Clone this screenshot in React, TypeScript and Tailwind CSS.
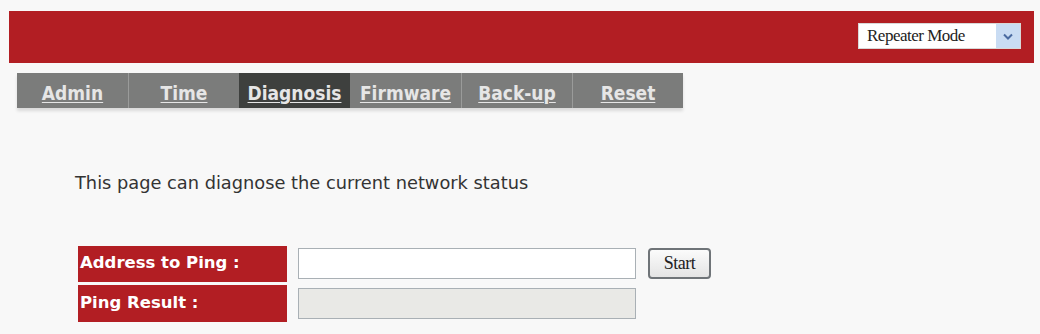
import { useState } from "react";

const tabs = ["Admin", "Time", "Diagnosis", "Firmware", "Back-up", "Reset"];

export default function App() {
  const [active] = useState("Diagnosis");
  const [addr, setAddr] = useState("");

  return (
    <div className="h-[334px] w-[1040px] overflow-hidden bg-[#f8f8f8] pt-[11px] font-['DejaVu_Sans',sans-serif]">
      {/* top banner */}
      <div className="ml-[9px] mr-[6px] flex h-[52px] items-start justify-end bg-[#b21e23] pr-[13px] pt-[12px]">
        <div className="flex h-[26px] w-[163px] items-center border border-[#d8d8d8] bg-white">
          <span className="flex-1 pl-[8px] font-['Liberation_Serif',serif] text-[17px] tracking-[-0.5px] text-[#222]">
            Repeater Mode
          </span>
          <span className="flex h-full w-[24px] items-center justify-center bg-[#c9dcf3]">
            <svg width="10" height="7" viewBox="0 0 10 7">
              <path d="M1 1.5 L5 5.5 L9 1.5" fill="none" stroke="#4a6aa0" strokeWidth="2" />
            </svg>
          </span>
        </div>
      </div>

      {/* tab bar */}
      <div className="ml-[17px] mt-[10px] flex w-[666px] shadow-[0_3px_3px_rgba(0,0,0,0.12)]">
        {tabs.map((t, i) => (
          <div
            key={t}
            className={
              "flex h-[35px] w-[111px] items-center justify-center pt-[5px] " +
              (t === active ? "bg-[#3e403e]" : "bg-[#7b7c7b]") +
              (i > 0 && t !== active && tabs[i - 1] !== active ? " border-l border-[#9a9b9a]" : "")
            }
          >
            <span className="font-['DejaVu_Sans_Condensed',sans-serif] text-[19px] font-bold text-[#e6e6e6] underline decoration-1 underline-offset-2">
              {t}
            </span>
          </div>
        ))}
      </div>

      <p className="ml-[75px] mt-[62px] text-[17.8px] text-[#333]">
        This page can diagnose the current network status
      </p>

      <div className="ml-[78px] mt-[49px] flex flex-col gap-[3px]">
        <div className="flex items-center">
          <div className="flex h-[36px] w-[209px] items-center bg-[#b21e23] pl-[2px] text-[16.5px] font-bold text-white">
            Address to Ping :
          </div>
          <input
            value={addr}
            onChange={(e) => setAddr(e.target.value)}
            className="ml-[11px] h-[31px] w-[338px] border border-[#a9b0b5] bg-white outline-none"
          />
          <button className="ml-[12px] h-[31px] w-[63px] rounded-[4px] border-2 border-[#6f7478] bg-gradient-to-b from-[#fbfbfb] to-[#e4e4e4] font-['Liberation_Serif',serif] text-[18px] tracking-[-0.5px] text-[#222]">
            Start
          </button>
        </div>
        <div className="flex items-center">
          <div className="flex h-[37px] w-[209px] items-center bg-[#b21e23] pl-[2px] text-[16.5px] font-bold text-white">
            Ping Result :
          </div>
          <div className="ml-[11px] h-[31px] w-[338px] border border-[#a9b0b5] bg-[#e9e9e6]" />
        </div>
      </div>
    </div>
  );
}
